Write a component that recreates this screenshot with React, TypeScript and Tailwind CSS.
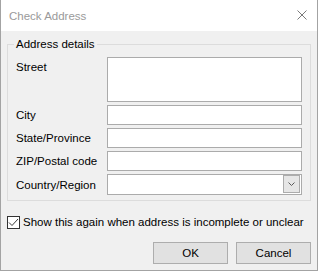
import React from "react";

const font = { fontFamily: '"Liberation Sans", Arial, sans-serif' };

function TextBox({ tall = false }: { tall?: boolean }) {
  return (
    <div
      className={`w-[195px] border border-[#ababab] bg-white ${tall ? "h-[45px]" : "h-[20px]"}`}
    />
  );
}

function Row({ label, children }: { label: string; children: React.ReactNode }) {
  return (
    <div className="flex items-start">
      <div className="flex h-[20px] w-[91px] items-center">{label}</div>
      {children}
    </div>
  );
}

export default function App() {
  return (
    <div
      style={font}
      className="flex h-[271px] w-[318px] flex-col border-x border-b border-[#a3a3a3] bg-[#f0f0f0] text-[11.5px] leading-[14px] text-black"
    >
      {/* barra de título */}
      <div className="flex h-[31px] items-center justify-between bg-white pl-[8px] pr-[10px]">
        <span className="text-[#9a9a9a]">Check Address</span>
        <svg width="10" height="10" viewBox="0 0 10 10" className="mb-[1px]">
          <path d="M0.5 0.5 L9.5 9.5 M9.5 0.5 L0.5 9.5" stroke="#7a7a7a" strokeWidth="1" />
        </svg>
      </div>

      <fieldset className="mx-[6px] mt-[6px] border border-[#dcdcdc] pb-[5px] pl-[6px] pt-[6px]">
        <legend className="px-[2px]">Address details</legend>
        <div className="flex flex-col gap-[3px] pl-[2px]">
          <Row label="Street">
            <TextBox tall />
          </Row>
          <Row label="City">
            <TextBox />
          </Row>
          <Row label="State/Province">
            <TextBox />
          </Row>
          <Row label="ZIP/Postal code">
            <TextBox />
          </Row>
          <div className="flex items-center">
            <div className="w-[91px]">Country/Region</div>
            <div className="flex h-[21px] w-[195px] justify-end border border-[#ababab] bg-white pr-[1px]">
              <div className="flex h-[18px] w-[17px] items-center justify-center border border-[#acacac] bg-[#e6e6e6]">
                <svg width="7" height="4" viewBox="0 0 7 4">
                  <path d="M0.5 0.5 L3.5 3.5 L6.5 0.5" stroke="#5a5a5a" strokeWidth="1" fill="none" />
                </svg>
              </div>
            </div>
          </div>
        </div>
      </fieldset>

      <label className="mt-[14px] ml-[6px] flex items-center gap-[3px]">
        <span className="flex h-[13px] w-[13px] items-center justify-center border border-[#333333] bg-white">
          <svg width="11" height="11" viewBox="0 0 11 11">
            <path d="M1 5.5 L4 8.5 L10 2" stroke="#3a3a3a" strokeWidth="1" fill="none" />
          </svg>
        </span>
        <span>Show this again when address is incomplete or unclear</span>
      </label>

      <div className="mt-[13px] flex justify-end gap-[8px] pr-[6px]">
        <button className="h-[22px] w-[75px] border border-[#adadad] bg-[#e1e1e1]">OK</button>
        <button className="h-[22px] w-[75px] border border-[#adadad] bg-[#e1e1e1]">Cancel</button>
      </div>
    </div>
  );
}
